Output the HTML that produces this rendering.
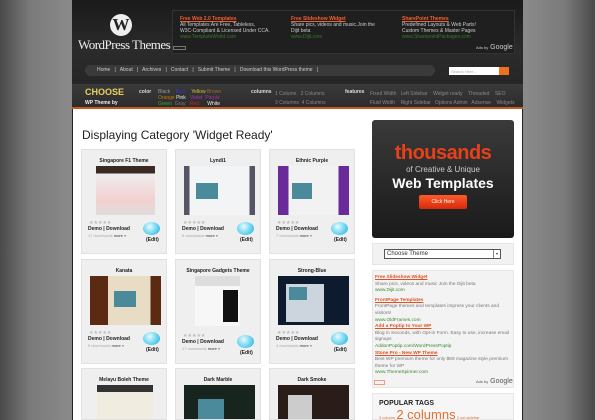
<!DOCTYPE html>
<html><head><meta charset="utf-8"><style>
*{margin:0;padding:0;box-sizing:border-box}
html,body{width:595px;height:420px;overflow:hidden}
body{font-family:"Liberation Sans",sans-serif}
#root{position:relative;width:595px;height:420px;overflow:hidden;background:linear-gradient(90deg,#4a4a4a 0,#7a7a7a 30px,#8a8a8a 70px,#8a8a8a 525px,#7a7a7a 565px,#4a4a4a 595px)}
.a{position:absolute}
#wrap{left:72px;top:0;width:451px;height:420px;background:#fff;border-left:1px solid #222;border-right:1px solid #222}
#hd{left:72px;top:0;width:451px;height:84px;background:linear-gradient(#1a1a1a,#2b2b2b 60%,#262626)}
.t{font-size:5px;color:#ccc;line-height:6px}
.card{width:86px;height:105px;background:#efefef;border:1px solid #e2e2e2;overflow:hidden}
.card .n{position:absolute;top:8px;left:0;width:100%;text-align:center;font-size:5px;font-weight:bold;color:#222}
.card .im{position:absolute;top:16px;left:11px;width:64px;height:49px}
.card .st{position:absolute;top:70px;left:7px;font-size:5px;color:#bbb}
.card .dl{position:absolute;top:76px;left:6px;font-size:5px;font-weight:bold;color:#222}
.card .mo{position:absolute;top:83px;left:6px;font-size:4px;color:#aaa}
.card .bub{position:absolute;top:72px;left:61px;width:17px;height:13px;border-radius:50%;background:radial-gradient(circle at 40% 35%,#e8fbff,#5fd0ee 60%,#2aaad6)}
.card .ed{position:absolute;top:87px;left:64px;font-size:5px;font-weight:bold;color:#222}
</style></head><body><div id="root">
<div class="a" id="wrap"></div>
<div class="a" id="hd"></div>
<div class="a" style="left:110px;top:14px;width:22px;height:22px;border-radius:50%;background:#eee;color:#222;font:bold 17px 'Liberation Serif',serif;text-align:center;line-height:22px">W</div>
<div class="a" style="left:78px;top:37px;font:13px 'Liberation Serif',serif;color:#eee;letter-spacing:-0.5px">WordPress Themes</div>
<div class="a" style="left:172px;top:10px;width:343px;height:44px;background:#1f1f1f;border:1px solid #333"></div>
<div class="a t" style="left:180px;top:16px"><span style="color:#f06030;text-decoration:underline;font-weight:bold">Free Web 2.0 Templates</span><br>All Templates Are Free, Tableless,<br>W3C-Compliant &amp; Licensed Under CCA.<br><span style="color:#3a7a2a">www.TemplateWorld.com</span></div>
<div class="a t" style="left:291px;top:16px"><span style="color:#f06030;text-decoration:underline;font-weight:bold">Free Slideshow Widget</span><br>Share pics, videos and music.Join the<br>Dijit beta<br><span style="color:#3a7a2a">www.Dijit.com</span></div>
<div class="a t" style="left:402px;top:16px"><span style="color:#f06030;text-decoration:underline;font-weight:bold">SharePoint Themes</span><br>Predefined Layouts &amp; Web Parts!<br>Custom Themes &amp; Master Pages<br><span style="color:#3a7a2a">www.SharepointPackages.com</span></div>
<div class="a" style="left:173px;top:46px;width:13px;height:4px;border:1px solid #777"></div>
<div class="a" style="left:476px;top:44px;font-size:7px;color:#ccc"><span style="font-size:4px">Ads by</span> Google</div>
<div class="a" style="left:85px;top:65px;width:350px;height:11px;border-radius:6px;background:#3a3a3a"></div>
<div class="a" style="left:97px;top:67px;font-size:5px;color:#ccc;white-space:nowrap">Home &nbsp;&nbsp;|&nbsp;&nbsp; About &nbsp;&nbsp;|&nbsp;&nbsp; Archives &nbsp;&nbsp;|&nbsp;&nbsp; Contact &nbsp;&nbsp;|&nbsp;&nbsp; Submit Theme &nbsp;&nbsp;|&nbsp;&nbsp; Download this WordPress theme &nbsp;&nbsp;|</div>
<div class="a" style="left:449px;top:67px;width:50px;height:8px;background:#fff;font-size:4px;color:#aaa;padding:2px">Search Here...</div>
<div class="a" style="left:499px;top:67px;width:10px;height:8px;background:#f07020"></div>
<div class="a" style="left:72px;top:84px;width:451px;height:25px;background:linear-gradient(#3a3a3a,#2c2c2c);border-bottom:2px solid #c85a20"></div>
<div class="a" style="left:85px;top:88px;font:bold 9px 'Liberation Sans',sans-serif;color:#e8d060;line-height:9px">CHOOSE<br><span style="font-size:5px;color:#eee">WP Theme by</span></div>
<div class="a t" style="left:139px;top:89px;color:#ddd;font-weight:bold">color</div>
<div class="a t" style="left:158px;top:89px;width:80px"><span style="color:#999">Black</span>&nbsp;&nbsp;&nbsp; <span style="color:#33c">Blue</span>&nbsp;&nbsp;&nbsp; <span style="color:#cc3">Yellow</span> <span style="color:#a63">Brown</span><br><span style="color:#c70">Orange</span> <span style="color:#eee">Pink</span>&nbsp;&nbsp; <span style="color:#a3a">Violet</span>&nbsp; <span style="color:#939">Purple</span><br><span style="color:#3a3">Green</span>&nbsp; <span style="color:#777">Gray</span>&nbsp;&nbsp; <span style="color:#c22">Red</span>&nbsp;&nbsp;&nbsp;&nbsp;&nbsp; <span style="color:#eee">White</span></div>
<div class="a t" style="left:251px;top:89px;color:#ddd;font-weight:bold">columns</div>
<div class="a t" style="left:275px;top:90px;color:#888;line-height:9px">1 Column &nbsp; 2 Columns<br>3 Columns &nbsp;4 Columns</div>
<div class="a t" style="left:345px;top:89px;color:#ddd;font-weight:bold">features</div>
<div class="a t" style="left:370px;top:90px;color:#888;line-height:9px;white-space:nowrap">Fixed Width &nbsp; Left Sidebar &nbsp;&nbsp; Widget ready &nbsp;&nbsp; Threaded &nbsp;&nbsp; SEO<br>Fluid Width &nbsp;&nbsp; Right Sidebar &nbsp; Options Admin &nbsp; Adsense &nbsp;&nbsp; Widgets</div>
<div class="a" style="left:82px;top:128px;font-size:12px;color:#222;white-space:nowrap">Displaying Category 'Widget Ready'</div>
<div class="a card" style="left:81px;top:149px"><div class="n">Singapore F1 Theme</div><div class="im" style="left:14px;width:59px;background:linear-gradient(#3a2a22 0,#3a2a22 15%,#eee 15%,#f3d0d0 70%,#ddd)"></div><div class="st">★★★★★</div><div class="dl">Demo | Download</div><div class="mo">17 downloads <span style="color:#333">more »</span></div><div class="bub"></div><div class="ed">(Edit)</div></div>
<div class="a card" style="left:175px;top:149px"><div class="n">Lyndi1</div><div class="im" style="left:8px;width:71px;background:linear-gradient(90deg,#556 0,#556 8%,#f2f4f6 8%,#f2f4f6 92%,#556 92%)"><div class="a" style="left:12px;top:17px;width:22px;height:16px;background:#4a8a9a"></div></div><div class="st">★★★★★</div><div class="dl">Demo | Download</div><div class="mo">8 downloads <span style="color:#333">more »</span></div><div class="bub"></div><div class="ed">(Edit)</div></div>
<div class="a card" style="left:269px;top:149px"><div class="n">Ethnic Purple</div><div class="im" style="left:8px;width:71px;background:linear-gradient(90deg,#6a2a9a 0,#6a2a9a 15%,#f2f2f2 15%,#f2f2f2 85%,#6a2a9a 85%)"><div class="a" style="left:14px;top:17px;width:20px;height:16px;background:#4a8a9a"></div></div><div class="st">★★★★★</div><div class="dl">Demo | Download</div><div class="mo">7 downloads <span style="color:#333">more »</span></div><div class="bub"></div><div class="ed">(Edit)</div></div>
<div class="a card" style="left:81px;top:259px"><div class="n">Kanata</div><div class="im" style="left:8px;width:71px;background:linear-gradient(90deg,#5a2a12 0,#5a2a12 25%,#e8dcc4 25%,#e8dcc4 85%,#5a2a12 85%)"><div class="a" style="left:24px;top:15px;width:22px;height:16px;background:#4a8a9a"></div></div><div class="st">★★★★★</div><div class="dl">Demo | Download</div><div class="mo">5 downloads <span style="color:#333">more »</span></div><div class="bub"></div><div class="ed">(Edit)</div></div>
<div class="a card" style="left:175px;top:259px"><div class="n">Singapore Gadgets Theme</div><div class="im" style="left:19px;width:45px;height:50px;background:linear-gradient(#ddd 0,#ddd 20%,#f7f7f7 20%)"><div class="a" style="left:28px;top:14px;width:15px;height:32px;background:#111"></div></div><div class="st" style="top:73px">★★★★★</div><div class="dl" style="top:79px">Demo | Download</div><div class="mo" style="top:86px">17 downloads <span style="color:#333">more »</span></div><div class="bub" style="top:75px"></div><div class="ed" style="top:90px">(Edit)</div></div>
<div class="a card" style="left:269px;top:259px"><div class="n">Strong-Blue</div><div class="im" style="left:8px;width:71px;background:#0e1a2e"><div class="a" style="left:8px;top:8px;width:38px;height:38px;background:#ccd4de"></div><div class="a" style="left:11px;top:11px;width:18px;height:13px;background:#4a8a9a"></div></div><div class="st">★★★★★</div><div class="dl">Demo | Download</div><div class="mo">4 downloads <span style="color:#333">more »</span></div><div class="bub"></div><div class="ed">(Edit)</div></div>
<div class="a card" style="left:81px;top:368px;height:52px"><div class="n">Melayu Boleh Theme</div><div class="im" style="left:15px;width:56px;height:36px;background:linear-gradient(#333 0,#333 20%,#f0ece0 20%)"></div></div>
<div class="a card" style="left:175px;top:368px;height:52px"><div class="n">Dark Marble</div><div class="im" style="left:8px;width:71px;height:36px;background:#18241e"><div class="a" style="left:14px;top:14px;width:26px;height:20px;background:#4a8a9a"></div></div></div>
<div class="a card" style="left:269px;top:368px;height:52px"><div class="n">Dark Smoke</div><div class="im" style="left:8px;width:71px;height:36px;background:#2a1c18"><div class="a" style="left:10px;top:10px;width:24px;height:26px;background:#ccc"></div></div></div>
<div class="a" style="left:372px;top:120px;width:142px;height:118px;border-radius:3px;background:linear-gradient(#3a3a3a,#1a1a1a);text-align:center">
<div style="margin-top:22px;font:bold 20px 'Liberation Sans',sans-serif;color:#e8401a;letter-spacing:-0.5px">thousands</div>
<div style="font-size:8px;color:#ccc">of Creative &amp; Unique</div>
<div style="font:bold 14px 'Liberation Sans',sans-serif;color:#fff;margin-top:1px">Web Templates</div>
<div style="margin:4px auto 0;width:48px;height:14px;background:linear-gradient(#ff5a2a,#d62a0a);border-radius:2px;font-size:5px;color:#fff;line-height:14px">Click Here</div></div>
<div class="a" style="left:372px;top:243px;width:142px;height:22px;background:#f2f2f2;border:1px solid #e6e6e6"></div>
<div class="a" style="left:384px;top:249px;width:117px;height:10px;background:#fff;border:1px solid #555;font-size:6px;color:#333;padding-left:2px;line-height:8px">Choose Theme<span style="float:right;width:7px;height:8px;border-left:1px solid #888;font-size:4px;text-align:center">▾</span></div>
<div class="a" style="left:372px;top:270px;width:142px;height:118px;background:#f3f3f3;border:1px solid #e6e6e6"></div>
<div class="a" style="left:375px;top:275px;width:136px;font-size:4.8px;line-height:6.6px;color:#777">
<span style="color:#e05020;font-weight:bold;text-decoration:underline">Free Slideshow Widget</span><br>Share pics, videos and music Join the Dijit beta<br><span style="color:#3a8a2a">www.Dijit.com</span><br>
<div style="height:3px"></div><span style="color:#e05020;font-weight:bold;text-decoration:underline">FrontPage Templates</span><br>FrontPage themes and templates impress your clients and visitors!<br><span style="color:#3a8a2a">www.OldFrames.com</span><br>
<span style="color:#e05020;font-weight:bold;text-decoration:underline">Add a Poptip to Your WP</span><br>Blog in Seconds, with Opt-in Form. Easy to use, increase email signups<br><span style="color:#3a8a2a">AddonPoptip.com/WordPressPoptip</span><br>
<span style="color:#e05020;font-weight:bold;text-decoration:underline">Stone Pro - New WP Theme</span><br>Best WP premium theme for only $69 magazine style premium theme for WP<br><span style="color:#3a8a2a">www.ThemeSpinner.com</span></div>
<div class="a" style="left:374px;top:380px;width:11px;height:5px;border:1px solid #e8a080"></div>
<div class="a" style="left:476px;top:378px;font-size:7px;color:#555"><span style="font-size:4px">Ads by</span> Google</div>
<div class="a" style="left:372px;top:393px;width:142px;height:27px;background:#f6f6f6;border:1px solid #e6e6e6;overflow:hidden">
<div class="a" style="left:6px;top:6px;font-size:7px;font-weight:bold;color:#222">POPULAR TAGS</div>
<div class="a" style="left:6px;top:13px;font-size:4px;color:#e07030;white-space:nowrap">3 column <span style="font-size:13px">2 columns</span> 2 col-sidebar</div></div>
</div></body></html>
